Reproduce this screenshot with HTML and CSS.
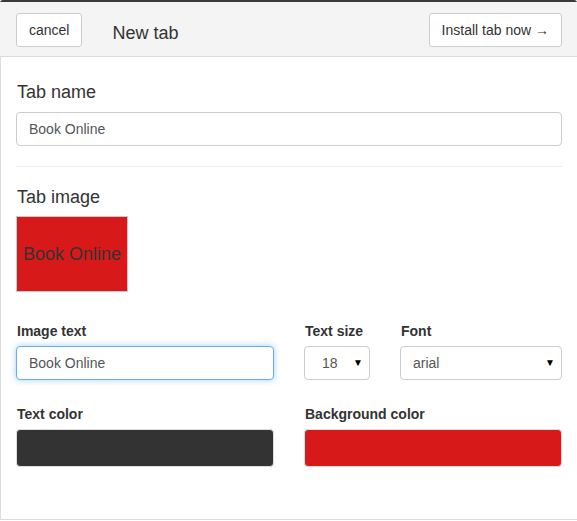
FILE: index.html
```html
<!DOCTYPE html>
<html>
<head>
<meta charset="utf-8">
<link rel="stylesheet" href="styles.css">
</head>
<body>
<div class="panel">
  <div class="header">
    <button class="btn">cancel</button>
    <div class="title">New tab</div>
    <button class="btn btn-install">Install tab now &#8594;</button>
  </div>
  <div class="content">
    <h2 class="section-label">Tab name</h2>
    <div class="input">Book Online</div>
    <hr class="divider">
    <h2 class="section-label label-image">Tab image</h2>
    <div class="preview">Book Online</div>
    <div class="row row-text">
      <div class="field">
        <div class="label">Image text</div>
        <div class="input input-focus">Book Online</div>
      </div>
      <div class="field">
        <div class="label">Text size</div>
        <div class="input select select-size">18<span class="caret">&#9660;</span></div>
      </div>
      <div class="field">
        <div class="label">Font</div>
        <div class="input select">arial<span class="caret">&#9660;</span></div>
      </div>
    </div>
    <div class="row row-color">
      <div class="field">
        <div class="label">Text color</div>
        <div class="swatch swatch-dark"></div>
      </div>
      <div class="field field-wide">
        <div class="label">Background color</div>
        <div class="swatch swatch-red"></div>
      </div>
    </div>
  </div>
</div>
</body>
</html>
```

FILE: styles.css
```css
html, body {
  margin: 0;
  padding: 0;
  background: #fff;
}
body {
  font-family: "Liberation Sans", Arial, sans-serif;
  color: #333;
  font-size: 14px;
}
.panel {
  width: 577px;
  height: 521px;
  box-sizing: border-box;
  border-top: 2px solid #3a3a3a;
  border-radius: 3px 3px 0 0;
  display: flex;
  flex-direction: column;
}
.header {
  height: 55px;
  box-sizing: border-box;
  background: #f4f4f4;
  border-bottom: 1px solid #dcdcdc;
  display: flex;
  align-items: flex-start;
  padding: 11px 15px 0 16px;
}
.btn {
  font-family: "Liberation Sans", Arial, sans-serif;
  font-size: 14px;
  color: #333;
  background: #fff;
  border: 1px solid #ccc;
  border-radius: 3px;
  height: 34px;
  padding: 0 12px;
  margin: 0;
  white-space: nowrap;
}
.title {
  font-size: 18px;
  margin-left: 30px;
  margin-top: 10px;
  flex: 1;
  color: #333;
}
.btn-install {
  padding: 0 12px;
}
.content {
  flex: 1;
  border-left: 1px solid #dcdcdc;
  border-bottom: 1px solid #dcdcdc;
  padding: 0 15px 0 15px;
  margin-bottom: 1px;
}
.section-label {
  font-size: 18px;
  font-weight: normal;
  margin: 25px 0 0 1px;
  line-height: 20px;
  color: #333;
}
.label-image {
  margin-top: 20px;
}
.input {
  box-sizing: border-box;
  height: 34px;
  border: 1px solid #ccc;
  border-radius: 4px;
  padding: 0 12px;
  line-height: 32px;
  font-size: 14px;
  color: #555;
  background: #fff;
  margin-top: 10px;
}
.divider {
  border: 0;
  border-top: 1px solid #eee;
  margin: 20px 0 0 0;
}
.preview {
  width: 112px;
  height: 76px;
  box-sizing: border-box;
  background: #d7191a;
  border: 1px solid #c8c8c8;
  margin-top: 9px;
  display: flex;
  align-items: center;
  justify-content: center;
  font-size: 18px;
  color: #333;
}
.row {
  display: grid;
  grid-template-columns: 258px 66px 1fr;
  column-gap: 30px;
}
.row-text {
  margin-top: 31px;
}
.row-color {
  margin-top: 26px;
  grid-template-columns: 258px 1fr;
}
.label {
  font-weight: bold;
  font-size: 14px;
  line-height: 16px;
  margin-left: 1px;
}
.row .input {
  margin-top: 7px;
}
.input-focus {
  border-color: #66afe9;
  box-shadow: 0 0 6px rgba(102, 175, 233, 0.6);
}
.select {
  display: flex;
  justify-content: space-between;
  align-items: center;
  padding: 0 6px 0 12px;
  color: #555;
}
.select-size {
  padding-left: 17px;
}
.caret {
  font-size: 10px;
  color: #000;
}
.swatch {
  height: 38px;
  border-radius: 4px;
  box-sizing: border-box;
  margin-top: 7px;
  border: 1px solid #ddd;
}
.swatch-dark {
  background: #333;
}
.swatch-red {
  background: #d7191a;
}
```
